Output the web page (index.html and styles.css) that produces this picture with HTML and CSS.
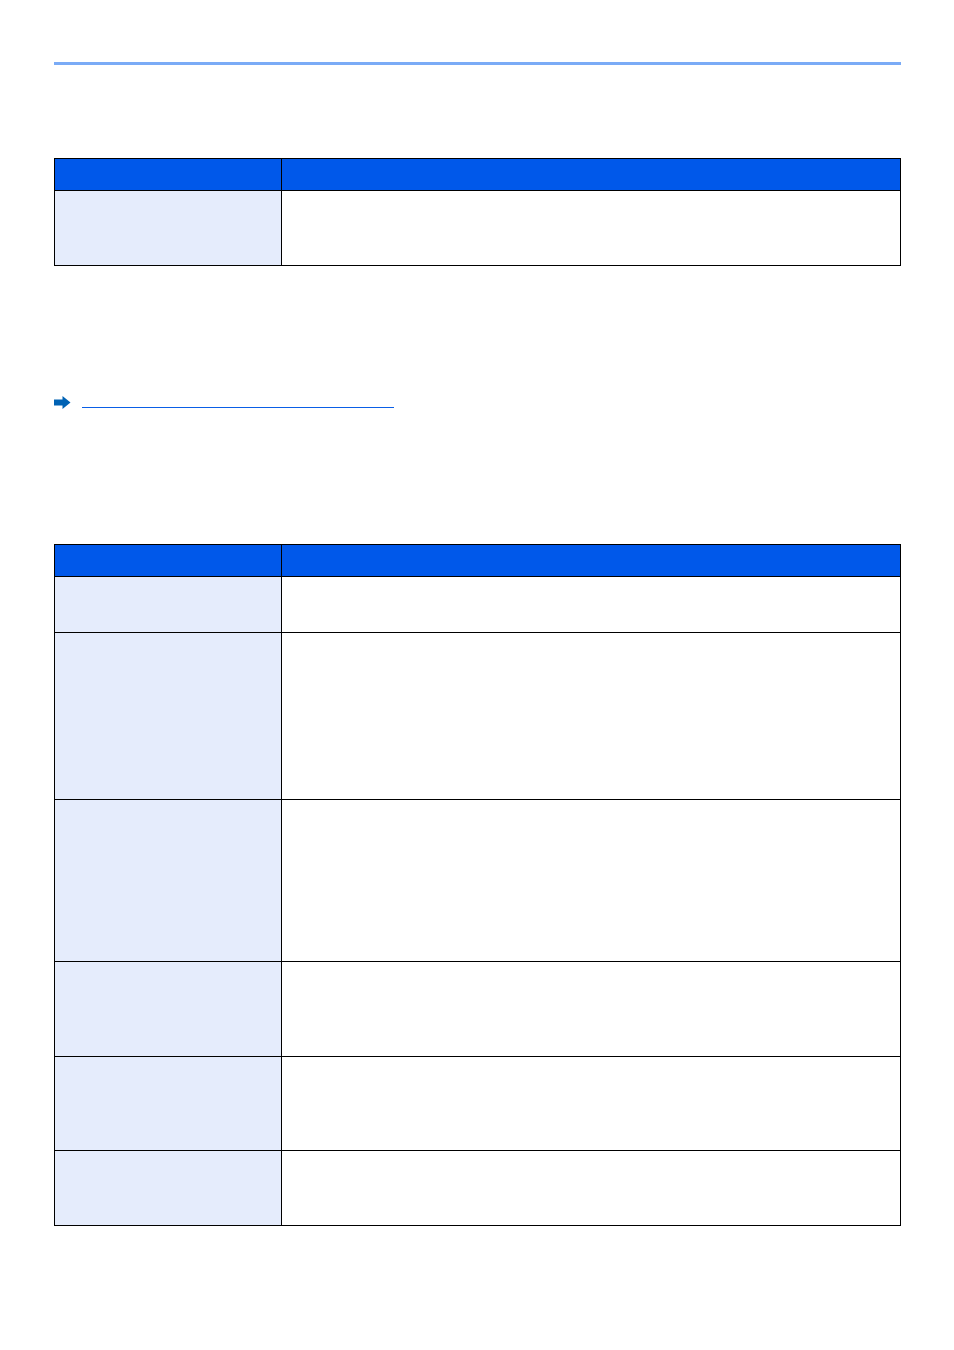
FILE: index.html
```html
<!DOCTYPE html>
<html>
<head>
<meta charset="utf-8">
<link rel="stylesheet" href="styles.css">
</head>
<body>
<div class="page">
  <div class="top-rule"></div>

  <div class="grid table-1">
    <div class="cell head"></div><div class="cell head"></div>
    <div class="cell key h75"></div><div class="cell val h75"></div>
  </div>

  <div class="ref">
    <svg class="arrow" width="17" height="13" viewBox="0 0 17 13">
      <path d="M0 3.5 H8.5 V0 L16.5 6.5 L8.5 13 V9.5 H0 Z" fill="#0062b4"/>
    </svg>
    <span class="link"></span>
  </div>

  <div class="grid table-2">
    <div class="cell head"></div><div class="cell head"></div>
    <div class="cell key h56"></div><div class="cell val h56"></div>
    <div class="cell key h167"></div><div class="cell val h167"></div>
    <div class="cell key h162"></div><div class="cell val h162"></div>
    <div class="cell key h95"></div><div class="cell val h95"></div>
    <div class="cell key h94"></div><div class="cell val h94"></div>
    <div class="cell key h75"></div><div class="cell val h75"></div>
  </div>
</div>
</body>
</html>
```

FILE: styles.css
```css
html, body {
  margin: 0;
  padding: 0;
  background: #ffffff;
  font-family: "Liberation Sans", Arial, sans-serif;
}

.page {
  padding: 62px 0 0 54px;
  width: 847px;
}

.top-rule {
  height: 3px;
  background: #7aabf6;
}

.grid {
  display: grid;
  grid-template-columns: 227px 619px;
  border-left: 1px solid #000;
  border-top: 1px solid #000;
  width: 846px;
}

.table-1 {
  margin-top: 93px;
}

.table-2 {
  margin-top: 135px;
}

.cell {
  box-sizing: border-box;
  border-right: 1px solid #000;
  border-bottom: 1px solid #000;
}

.head {
  height: 32px;
  background: #0058ea;
}

.key {
  background: #e5ecfc;
}

.val {
  background: #ffffff;
}

.h56 { height: 56px; }
.h75 { height: 75px; }
.h94 { height: 94px; }
.h95 { height: 95px; }
.h162 { height: 162px; }
.h167 { height: 167px; }

.ref {
  display: flex;
  align-items: flex-start;
  margin-top: 130px;
  height: 13px;
}

.arrow {
  display: block;
  flex: none;
}

.link {
  display: block;
  margin-left: 11px;
  margin-top: 11px;
  width: 312px;
  height: 1px;
  background: #0a5ee6;
}
```
